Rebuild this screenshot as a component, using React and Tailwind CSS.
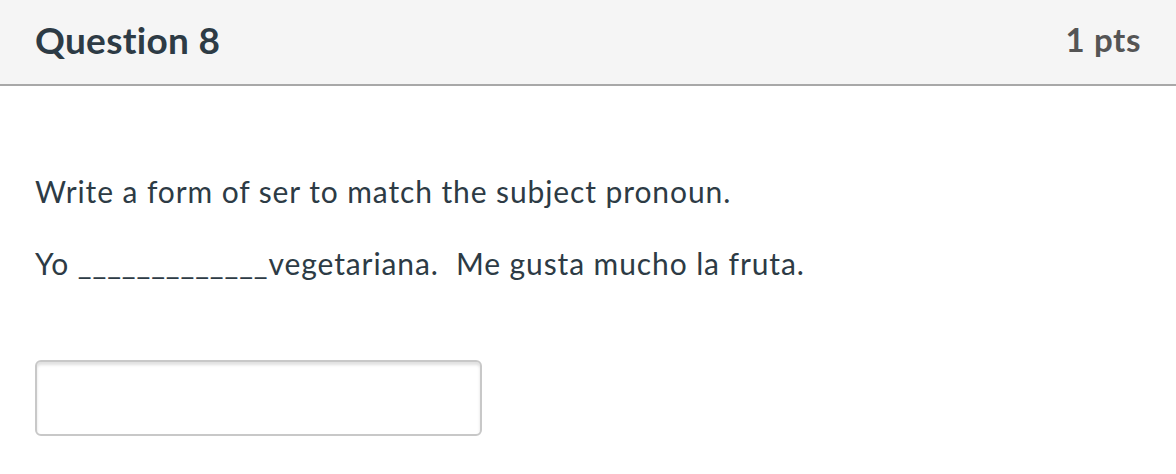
const App = () => {
  return (
    <div className="w-[1176px] h-[474px] bg-white font-['Lato','Noto_Sans',sans-serif] overflow-hidden">
      <div className="h-[86px] bg-[#f5f5f5] border-b-2 border-[#a8a8a8] flex items-center justify-between pl-[35px] pr-[35px]">
        <h2 className="text-[37px] font-bold text-[#2d3b45] tracking-[0.3px] leading-none pb-[5px]">Question 8</h2>
        <div className="text-[33px] font-bold text-[#555555] tracking-[0.6px] leading-none pb-[5px]">1 pts</div>
      </div>
      <div className="pl-[35px] pt-[87px] text-[#2d3b45] text-[30px] tracking-[0.9px] leading-[36px]">
        <p>Write a form of ser to match the subject pronoun.</p>
        <p className="mt-[36px]">Yo _____________vegetariana.&nbsp; Me gusta mucho la fruta.</p>
        <div className="mt-[79px] w-[447px] h-[76px] rounded-[6px] border-2 border-[#c8c8c8] shadow-[inset_0_3px_3px_rgba(0,0,0,0.12)] bg-white"></div>
      </div>
    </div>
  );
};

export default App;
